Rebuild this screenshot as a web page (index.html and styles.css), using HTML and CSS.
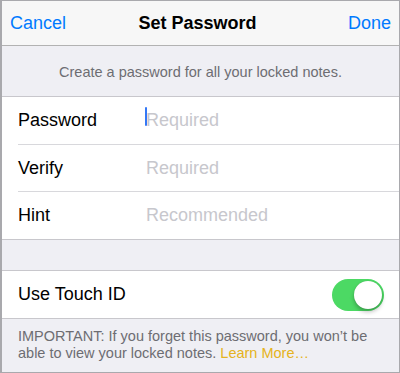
FILE: index.html
```html
<!DOCTYPE html>
<html>
<head>
<meta charset="utf-8">
<link rel="stylesheet" href="styles.css">
</head>
<body>
<div class="screen">
  <div class="nav">
    <span class="nav-btn left">Cancel</span>
    <span class="nav-title">Set Password</span>
    <span class="nav-btn right">Done</span>
  </div>
  <div class="header">Create a password for all your locked notes.</div>
  <div class="group">
    <div class="row">
      <span class="label">Password</span>
      <span class="field"><span class="cursor"></span><span class="placeholder">Required</span></span>
    </div>
    <div class="row">
      <span class="label">Verify</span>
      <span class="field"><span class="placeholder">Required</span></span>
    </div>
    <div class="row">
      <span class="label">Hint</span>
      <span class="field"><span class="placeholder">Recommended</span></span>
    </div>
  </div>
  <div class="gap"></div>
  <div class="group">
    <div class="row toggle-row">
      <span class="label">Use Touch ID</span>
      <span class="switch"><span class="knob"></span></span>
    </div>
  </div>
  <div class="footer">IMPORTANT: If you forget this password, you won’t be able to view your locked notes. <span class="link">Learn More…</span></div>
</div>
</body>
</html>
```
FILE: styles.css
```css
html, body {
  margin: 0;
  padding: 0;
}
body {
  font-family: "Liberation Sans", Arial, sans-serif;
  background: #efeff4;
}
.screen {
  width: 400px;
  height: 373px;
  box-sizing: border-box;
  border: 1px solid #a9a9ad;
  border-left-width: 2px;
  background: #efeff4;
  overflow: hidden;
  display: flex;
  flex-direction: column;
}
.nav {
  height: 44px;
  flex: none;
  background: #f7f7f7;
  border-bottom: 1px solid #b2b2b2;
  display: grid;
  grid-template-columns: 1fr auto 1fr;
  align-items: center;
  padding: 0 8px;
}
.nav-btn {
  color: #007aff;
  font-size: 18px;
}
.nav-btn.right {
  justify-self: end;
}
.nav-title {
  font-weight: bold;
  font-size: 18px;
  color: #000;
  margin-left: -6px;
}
.header {
  height: 51px;
  flex: none;
  display: flex;
  align-items: center;
  justify-content: center;
  color: #6d6d72;
  font-size: 14.5px;
  border-bottom: 1px solid #c8c7cc;
  box-sizing: border-box;
  padding-top: 2px;
}
.group {
  background: #fff;
  flex: none;
  border-bottom: 1px solid #c8c7cc;
}
.row {
  height: 47px;
  display: flex;
  align-items: center;
  margin-left: 16px;
  border-bottom: 1px solid #d8d8dc;
  font-size: 18px;
}
.row:nth-child(2) {
  height: 46px;
}
.row:last-child {
  border-bottom: none;
}
.label {
  width: 128px;
  color: #000;
}
.field {
  display: flex;
  align-items: center;
  position: relative;
}
.placeholder {
  color: #c7c7cd;
}
.cursor {
  position: absolute;
  left: -1px;
  top: -3px;
  width: 2px;
  height: 19px;
  background: #3478f6;
  border-radius: 1px;
}
.gap {
  height: 30px;
  flex: none;
  border-bottom: 1px solid #c8c7cc;
}
.toggle-row {
  justify-content: space-between;
  padding-right: 15px;
}
.switch {
  width: 52px;
  height: 32px;
  border-radius: 16px;
  background: #4cd964;
  position: relative;
  box-sizing: border-box;
}
.knob {
  position: absolute;
  right: 2px;
  top: 2px;
  width: 28px;
  height: 28px;
  border-radius: 50%;
  background: #fff;
  box-shadow: 0 3px 4px rgba(0,0,0,0.25), 0 0 1px rgba(0,0,0,0.2);
}
.footer {
  padding: 9px 16px 0 16px;
  font-size: 14.5px;
  line-height: 17px;
  color: #6d6d72;
}
.link {
  color: #e5b320;
}
```
